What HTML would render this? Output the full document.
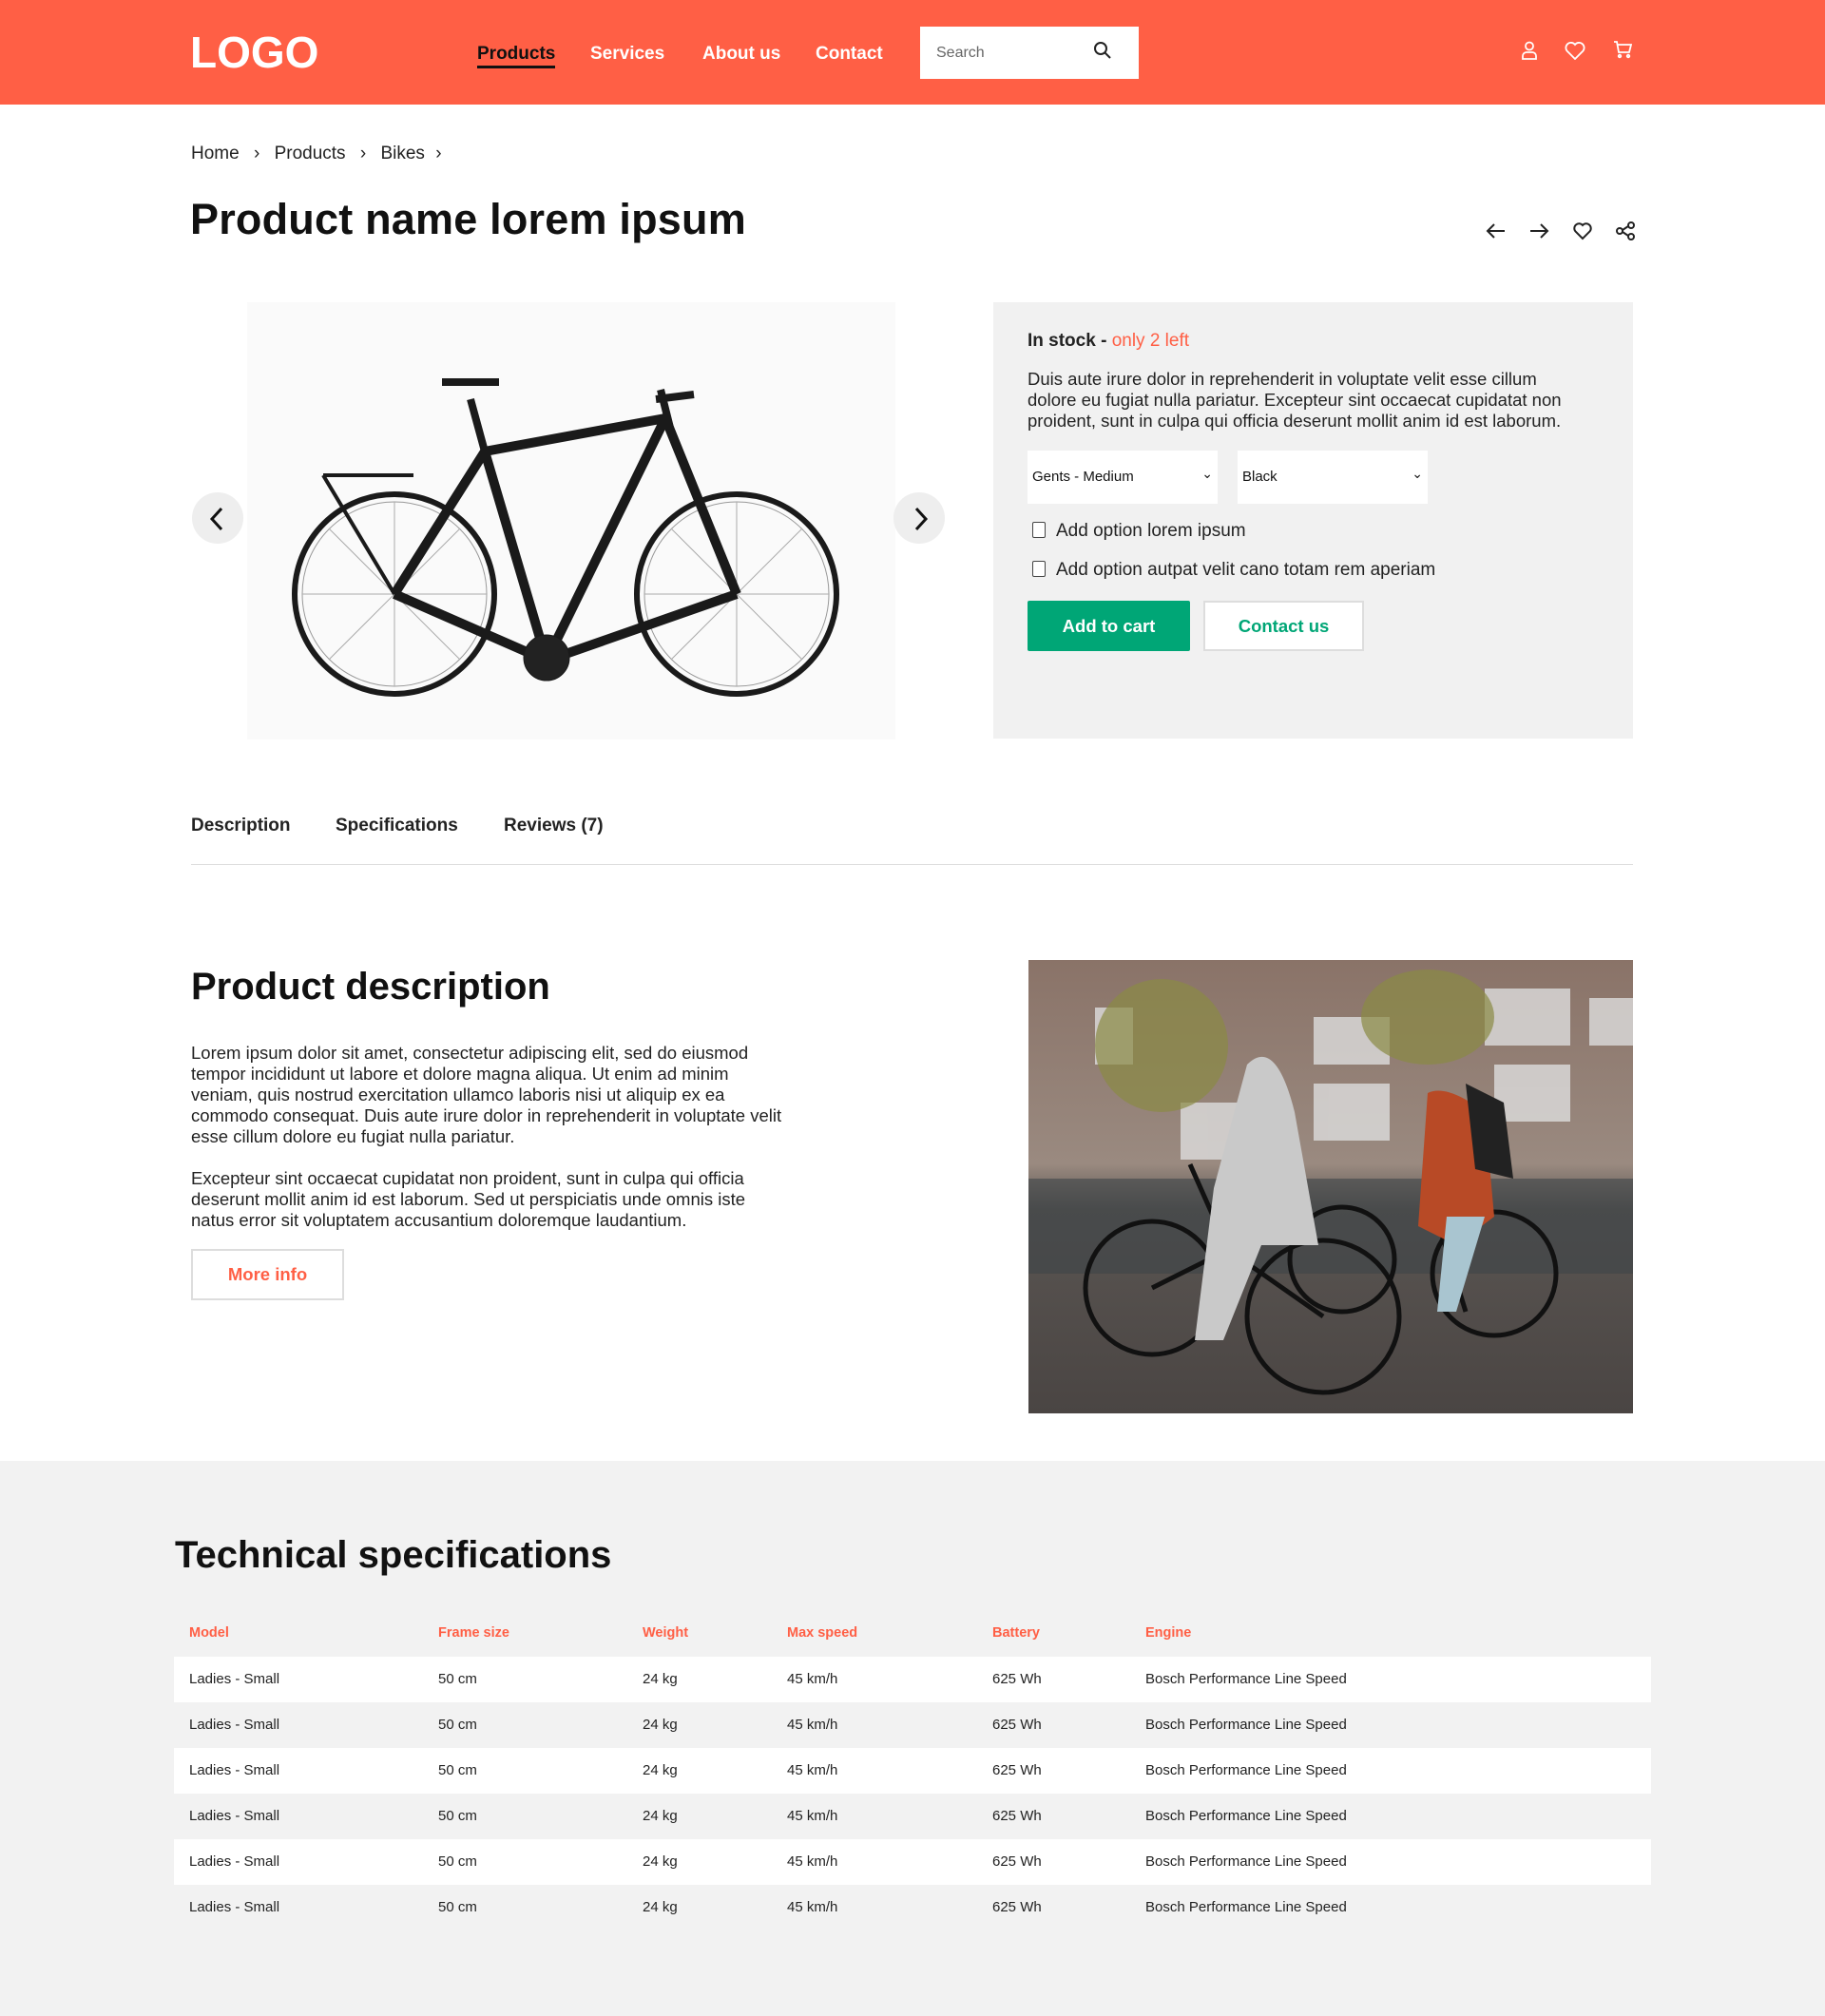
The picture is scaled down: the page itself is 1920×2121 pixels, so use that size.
<!DOCTYPE html>
<html><head><meta charset="utf-8"><style>
*{margin:0;padding:0;box-sizing:border-box}
body{width:1920px;height:2121px;position:relative;font-family:"Liberation Sans",sans-serif;color:#111;background:#fff;overflow:hidden}
.a{position:absolute;white-space:nowrap}
.hdr{position:absolute;left:0;top:0;width:1920px;height:110px;background:#ff5f45}
.nav{font-size:19px;font-weight:bold;color:#fff;top:46px}
.tbl{position:absolute;left:183px;width:1554px;font-size:15px}
.row{position:relative;height:48px}
.row span{position:absolute;top:15px}
</style></head><body>
<div class="hdr"></div>
<div class="a" style="left:200px;top:28px;font-size:46px;font-weight:bold;color:#fff;letter-spacing:0px">LOGO</div>
<div class="a nav" style="left:502px;color:#111;border-bottom:3px solid #111;padding-bottom:1px">Products</div>
<div class="a nav" style="left:621px">Services</div>
<div class="a nav" style="left:739px">About us</div>
<div class="a nav" style="left:858px">Contact</div>
<div class="a" style="left:968px;top:28px;width:230px;height:55px;background:#fff"></div>
<div class="a" style="left:985px;top:47px;font-size:16px;color:#666">Search</div>
<svg class="a" style="left:1150px;top:43px" width="20" height="20" viewBox="0 0 20 20" fill="none" stroke="#222" stroke-width="2"><circle cx="8" cy="8" r="6"/><path d="M12.5 12.5L18 18"/></svg>
<svg class="a" style="left:1600px;top:43px" width="18" height="20" viewBox="0 0 18 20" fill="none" stroke="#fff" stroke-width="1.8"><circle cx="9" cy="5.5" r="4"/><path d="M2 19v-3a4 4 0 014-4h6a4 4 0 014 4v3z"/></svg>
<svg class="a" style="left:1646px;top:44px" width="22" height="19" viewBox="0 0 22 19" fill="none" stroke="#fff" stroke-width="1.8"><path d="M11 18L2.5 9.5A5 5 0 0111 3a5 5 0 018.5 6.5z"/></svg>
<svg class="a" style="left:1697px;top:42px" width="20" height="20" viewBox="0 0 20 20" fill="none" stroke="#fff" stroke-width="1.8"><path d="M1 2h3l2 11h11l2-8H5"/><circle cx="7" cy="17" r="1.3"/><circle cx="16" cy="17" r="1.3"/></svg>

<div class="a" style="left:201px;top:151px;font-size:19px;color:#222">Home <span style="margin:0 10px;font-size:19px">›</span> Products <span style="margin:0 10px;font-size:19px">›</span> Bikes <span style="margin:0 6px;font-size:19px">›</span></div>
<div class="a" style="left:200px;top:205px;font-size:45px;font-weight:bold;letter-spacing:0.2px">Product name lorem ipsum</div>
<svg class="a" style="left:1563px;top:232px" width="160" height="22" viewBox="0 0 160 22" fill="none" stroke="#222" stroke-width="2"><path d="M20 11H3M9 4L2 11l7 7"/><path d="M47 11h17M58 4l7 7-7 7"/><path d="M102 19l-7.5-7.5A4.5 4.5 0 01102 5a4.5 4.5 0 017.5 6.5z"/><circle cx="141" cy="11" r="3"/><circle cx="153" cy="5" r="3"/><circle cx="153" cy="17" r="3"/><path d="M144 10l6-4M144 12l6 4"/></svg>

<div class="a" style="left:260px;top:318px;width:682px;height:460px;background:#fafafa"></div>
<svg class="a" style="left:300px;top:380px" width="600" height="370" viewBox="0 0 600 370" fill="none" stroke="#1a1a1a">
<circle cx="115" cy="245" r="105" stroke-width="6"/><circle cx="115" cy="245" r="97" stroke-width="1" stroke="#999"/>
<circle cx="475" cy="245" r="105" stroke-width="6"/><circle cx="475" cy="245" r="97" stroke-width="1" stroke="#999"/>
<g stroke="#aaa" stroke-width="1"><path d="M115 148V342M18 245H212M46 176l138 138M46 314l138-138M475 148V342M378 245H572M406 176l138 138M406 314l138-138"/></g>
<path d="M115 245L210 95 400 60 475 245M210 95l65 220 125-255M115 245l160 70 200-70" stroke-width="10"/>
<path d="M195 40l15 55M165 22h60M395 30l10 40 70 175M390 40l40-5" stroke-width="8"/>
<path d="M40 120h95M40 120l75 125" stroke-width="4"/>
<circle cx="275" cy="312" r="24" fill="#222"/>
</svg>
<div class="a" style="left:202px;top:518px;width:54px;height:54px;border-radius:50%;background:#eee"></div>
<svg class="a" style="left:219px;top:532px" width="18" height="28" viewBox="0 0 18 28" fill="none" stroke="#111" stroke-width="3"><path d="M14 3L4 14l10 11"/></svg>
<div class="a" style="left:940px;top:518px;width:54px;height:54px;border-radius:50%;background:#eee"></div>
<svg class="a" style="left:960px;top:532px" width="18" height="28" viewBox="0 0 18 28" fill="none" stroke="#111" stroke-width="3"><path d="M4 3l10 11L4 25"/></svg>

<div class="a" style="left:1045px;top:318px;width:673px;height:459px;background:#f1f1f1"></div>
<div class="a" style="left:1081px;top:348px;font-size:19px;font-weight:bold;color:#222">In stock - <span style="color:#ff5f45;font-weight:normal">only 2 left</span></div>
<div class="a" style="left:1081px;top:388px;font-size:18.5px;line-height:22px;color:#222;white-space:normal;width:590px">Duis aute irure dolor in reprehenderit in voluptate velit esse cillum dolore eu fugiat nulla pariatur. Excepteur sint occaecat cupidatat non proident, sunt in culpa qui officia deserunt mollit anim id est laborum.</div>
<div class="a" style="left:1081px;top:474px;width:200px;height:56px;background:#fff;font-size:15px;padding:19px 5px">Gents - Medium<span style="position:absolute;right:5px;top:16px;font-size:14px">⌄</span></div>
<div class="a" style="left:1302px;top:474px;width:200px;height:56px;background:#fff;font-size:15px;padding:19px 5px">Black<span style="position:absolute;right:5px;top:16px;font-size:14px">⌄</span></div>
<div class="a" style="left:1086px;top:549px;width:14px;height:17px;border:1.5px solid #444;border-radius:2px;background:#fff"></div>
<div class="a" style="left:1111px;top:548px;font-size:19px;color:#222">Add option lorem ipsum</div>
<div class="a" style="left:1086px;top:590px;width:14px;height:17px;border:1.5px solid #444;border-radius:2px;background:#fff"></div>
<div class="a" style="left:1111px;top:589px;font-size:19px;color:#222">Add option autpat velit cano totam rem aperiam</div>
<div class="a" style="left:1081px;top:632px;width:171px;height:53px;background:#00a676;border-radius:2px;color:#fff;font-weight:bold;font-size:18.5px;text-align:center;line-height:53px">Add to cart</div>
<div class="a" style="left:1266px;top:632px;width:169px;height:53px;background:#fff;border:2px solid #ddd;color:#00a676;font-weight:bold;font-size:18.5px;text-align:center;line-height:49px">Contact us</div>

<div class="a" style="left:201px;top:858px;font-size:19px;font-weight:bold;color:#222">Description</div>
<div class="a" style="left:353px;top:858px;font-size:19px;font-weight:bold;color:#222">Specifications</div>
<div class="a" style="left:530px;top:858px;font-size:19px;font-weight:bold;color:#222">Reviews (7)</div>
<div class="a" style="left:201px;top:909px;width:1517px;height:1px;background:#ddd"></div>

<div class="a" style="left:201px;top:1016px;font-size:40px;font-weight:bold">Product description</div>
<div class="a" style="left:201px;top:1097px;width:630px;font-size:18.5px;line-height:22px;color:#222;white-space:normal">Lorem ipsum dolor sit amet, consectetur adipiscing elit, sed do eiusmod tempor incididunt ut labore et dolore magna aliqua. Ut enim ad minim veniam, quis nostrud exercitation ullamco laboris nisi ut aliquip ex ea commodo consequat. Duis aute irure dolor in reprehenderit in voluptate velit esse cillum dolore eu fugiat nulla pariatur.<br><br>Excepteur sint occaecat cupidatat non proident, sunt in culpa qui officia deserunt mollit anim id est laborum. Sed ut perspiciatis unde omnis iste natus error sit voluptatem accusantium doloremque laudantium.</div>
<div class="a" style="left:201px;top:1314px;width:161px;height:54px;border:2px solid #ddd;color:#ff5f45;font-weight:bold;font-size:18.5px;text-align:center;line-height:50px">More info</div>

<svg class="a" style="left:1082px;top:1010px" width="636" height="477" viewBox="0 0 636 477">
<defs><linearGradient id="g" x1="0" y1="0" x2="0" y2="1"><stop offset="0" stop-color="#8a7368"/><stop offset="0.45" stop-color="#9a8a80"/><stop offset="0.55" stop-color="#5a5552"/><stop offset="1" stop-color="#4a4543"/></linearGradient></defs>
<rect width="636" height="477" fill="url(#g)"/>
<g fill="#ddd" opacity="0.8"><rect x="70" y="50" width="40" height="60"/><rect x="300" y="60" width="80" height="50"/><rect x="300" y="130" width="80" height="60"/><rect x="480" y="30" width="90" height="60"/><rect x="490" y="110" width="80" height="60"/><rect x="590" y="40" width="46" height="50"/><rect x="160" y="150" width="60" height="60"/></g>
<ellipse cx="140" cy="90" rx="70" ry="70" fill="#8a8a45" opacity="0.7"/><ellipse cx="420" cy="60" rx="70" ry="50" fill="#8a8a45" opacity="0.7"/>
<rect x="0" y="230" width="636" height="100" fill="#3e4448" opacity="0.6"/>
<g fill="none" stroke="#111" stroke-width="5"><circle cx="130" cy="345" r="70"/><circle cx="310" cy="375" r="80"/><circle cx="490" cy="330" r="65"/><circle cx="330" cy="315" r="55"/><path d="M130 345l80-40 100 70M210 305l-40-90M420 240l40 130"/></g>
<path d="M230 110q30-30 50 50l25 140-60 0-40 100-30 0 20-160z" fill="#c9c9c9"/>
<path d="M420 140q20-10 60 20l10 110-40 30-40-20z" fill="#b84a26"/>
<path d="M440 270l40 0-30 100-20 0z" fill="#a9c5d0"/>
<path d="M460 130l40 20 10 80-40-10z" fill="#222"/>
</svg>

<div class="a" style="left:0;top:1537px;width:1920px;height:584px;background:#f2f2f2"></div>
<div class="a" style="left:184px;top:1614px;font-size:40px;font-weight:bold">Technical specifications</div>
<div class="tbl" style="top:1695px;color:#ff5f45;font-weight:bold;font-size:14.5px">
<div class="row"><span style="left:16px">Model</span><span style="left:278px">Frame size</span><span style="left:493px">Weight</span><span style="left:645px">Max speed</span><span style="left:861px">Battery</span><span style="left:1022px">Engine</span></div>
</div>
<div class="tbl" style="top:1743px;color:#222">
<div class="row" style="background:#fff"><span style="left:16px">Ladies - Small</span><span style="left:278px">50 cm</span><span style="left:493px">24 kg</span><span style="left:645px">45 km/h</span><span style="left:861px">625 Wh</span><span style="left:1022px">Bosch Performance Line Speed</span></div>
<div class="row"><span style="left:16px">Ladies - Small</span><span style="left:278px">50 cm</span><span style="left:493px">24 kg</span><span style="left:645px">45 km/h</span><span style="left:861px">625 Wh</span><span style="left:1022px">Bosch Performance Line Speed</span></div>
<div class="row" style="background:#fff"><span style="left:16px">Ladies - Small</span><span style="left:278px">50 cm</span><span style="left:493px">24 kg</span><span style="left:645px">45 km/h</span><span style="left:861px">625 Wh</span><span style="left:1022px">Bosch Performance Line Speed</span></div>
<div class="row"><span style="left:16px">Ladies - Small</span><span style="left:278px">50 cm</span><span style="left:493px">24 kg</span><span style="left:645px">45 km/h</span><span style="left:861px">625 Wh</span><span style="left:1022px">Bosch Performance Line Speed</span></div>
<div class="row" style="background:#fff"><span style="left:16px">Ladies - Small</span><span style="left:278px">50 cm</span><span style="left:493px">24 kg</span><span style="left:645px">45 km/h</span><span style="left:861px">625 Wh</span><span style="left:1022px">Bosch Performance Line Speed</span></div>
<div class="row"><span style="left:16px">Ladies - Small</span><span style="left:278px">50 cm</span><span style="left:493px">24 kg</span><span style="left:645px">45 km/h</span><span style="left:861px">625 Wh</span><span style="left:1022px">Bosch Performance Line Speed</span></div>
</div>
</body></html>
